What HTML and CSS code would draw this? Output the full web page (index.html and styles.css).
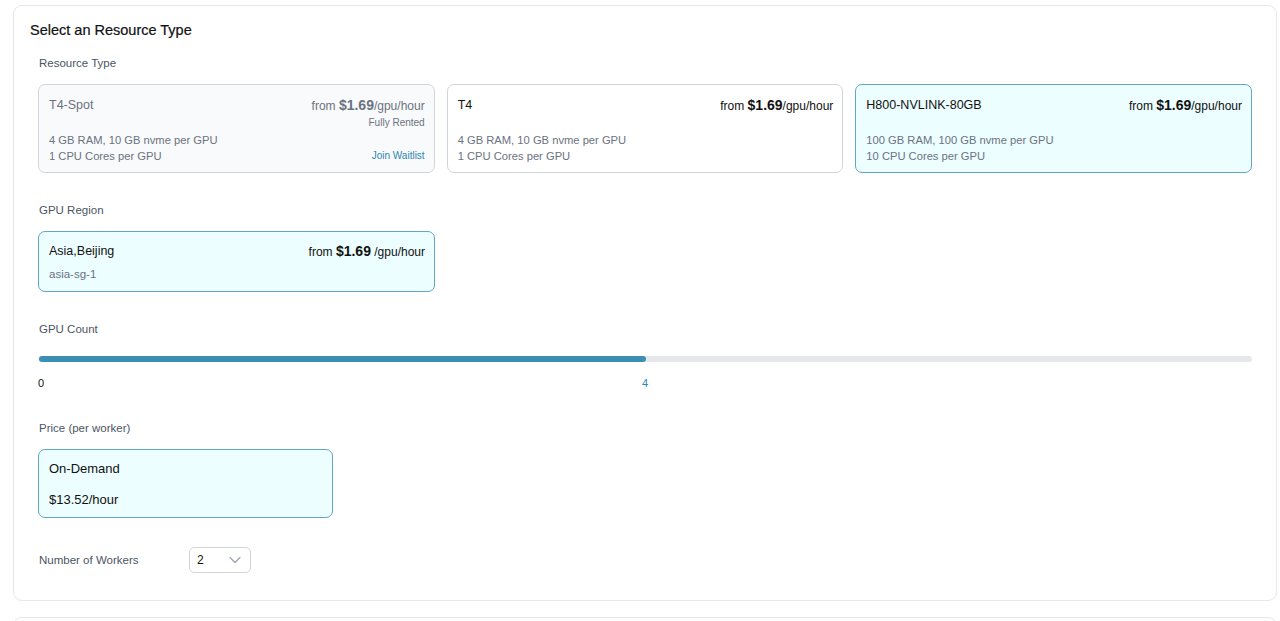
FILE: index.html
```html
<!DOCTYPE html>
<html lang="en">
<head>
    <meta charset="UTF-8">
    <meta name="viewport" content="width=device-width, initial-scale=1.0">
    <title>Select an Resource Type</title>
    <link rel="stylesheet" href="styles.css">
</head>
<body>
    <div class="panel">
        <h2 class="panel-title">Select an Resource Type</h2>

        <div class="section">
            <div class="field-label">Resource Type</div>
            <div class="type-grid">
                <div class="option-card disabled">
                    <div class="card-top">
                        <span class="card-name">T4-Spot</span>
                        <div class="card-right">
                            <span class="price">from <b>$1.69</b>/gpu/hour</span>
                            <span class="status">Fully Rented</span>
                        </div>
                    </div>
                    <div class="card-bottom">
                        <div class="specs">
                            <div>4 GB RAM, 10 GB nvme per GPU</div>
                            <div>1 CPU Cores per GPU</div>
                        </div>
                        <a class="waitlist" href="#">Join Waitlist</a>
                    </div>
                </div>

                <div class="option-card">
                    <div class="card-top">
                        <span class="card-name">T4</span>
                        <span class="price">from <b>$1.69</b>/gpu/hour</span>
                    </div>
                    <div class="card-bottom">
                        <div class="specs">
                            <div>4 GB RAM, 10 GB nvme per GPU</div>
                            <div>1 CPU Cores per GPU</div>
                        </div>
                    </div>
                </div>

                <div class="option-card selected">
                    <div class="card-top">
                        <span class="card-name">H800-NVLINK-80GB</span>
                        <span class="price">from <b>$1.69</b>/gpu/hour</span>
                    </div>
                    <div class="card-bottom">
                        <div class="specs">
                            <div>100 GB RAM, 100 GB nvme per GPU</div>
                            <div>10 CPU Cores per GPU</div>
                        </div>
                    </div>
                </div>
            </div>

            <div class="field-label">GPU Region</div>
            <div class="region-card selected">
                <div class="card-top">
                    <span class="card-name">Asia,Beijing</span>
                    <span class="price">from <b>$1.69</b> /gpu/hour</span>
                </div>
                <div class="region-code">asia-sg-1</div>
            </div>

            <div class="field-label">GPU Count</div>
            <div class="slider">
                <div class="slider-fill" style="width: 50%"></div>
            </div>
            <div class="slider-marks">
                <span>0</span>
                <span class="mark-current" style="left: 50%">4</span>
            </div>

            <div class="field-label">Price (per worker)</div>
            <div class="price-card selected">
                <div>On-Demand</div>
                <div>$13.52/hour</div>
            </div>

            <div class="workers-row">
                <span class="workers-label">Number of Workers</span>
                <div class="select">
                    <span>2</span>
                    <svg width="12" height="8" viewBox="0 0 12 8" fill="none" stroke="#9ca3af" stroke-width="1.2" stroke-linecap="round" stroke-linejoin="round">
                        <path d="M1 1.5l5 5 5-5"/>
                    </svg>
                </div>
            </div>
        </div>
    </div>

    <div class="panel next-panel"></div>
</body>
</html>
```

FILE: styles.css
```css
* {
    margin: 0;
    padding: 0;
    box-sizing: border-box;
}

html {
    overflow: hidden;
}

body {
    font-family: 'Liberation Sans', Arial, sans-serif;
    background: #fff;
    color: #111827;
    padding: 5px 3px 0 13px;
    height: 621px;
    overflow: hidden;
}

.panel {
    border: 1px solid #e5e7eb;
    border-radius: 9px;
    background: #fff;
    padding: 14px 0 24px 16px;
    height: 596px;
}

.next-panel {
    margin-top: 16px;
    height: 40px;
}

.panel-title {
    font-size: 14.5px;
    font-weight: 500;
    line-height: 20px;
    color: #111;
    -webkit-text-stroke: 0.2px #111;
}

.section {
    padding: 0 24px 0 8px;
}

.field-label {
    font-size: 11.5px;
    font-weight: 500;
    color: #4b5563;
    line-height: 16px;
    margin: 29px 0 13px 1px;
}

.section > .field-label:first-child {
    margin-top: 15px;
}

.type-grid {
    display: grid;
    grid-template-columns: repeat(3, 1fr);
    gap: 12px;
}

.option-card {
    height: 89px;
    border: 1px solid #d1d5db;
    border-radius: 7px;
    background: #fff;
    padding: 10px 9px 8px 10px;
    display: flex;
    flex-direction: column;
    justify-content: space-between;
}

.option-card.disabled {
    background: #f9fafb;
}

.option-card.disabled .card-name {
    color: #6b7280;
}

.selected {
    background: #ecfeff;
    border-color: #62a6c4;
}

.card-top {
    display: flex;
    justify-content: space-between;
    align-items: flex-start;
}

.card-name {
    font-size: 12.5px;
    line-height: 20px;
    color: #111;
}

.card-right {
    display: flex;
    flex-direction: column;
    align-items: flex-end;
}

.price {
    font-size: 12px;
    line-height: 20px;
    color: #111;
}

.disabled .price {
    color: #6b7280;
}

.price b {
    font-size: 14px;
    font-weight: 600;
}

.status {
    font-size: 10px;
    color: #6b7280;
    line-height: 14px;
}

.card-bottom {
    display: flex;
    justify-content: space-between;
    align-items: flex-end;
}

.specs {
    font-size: 11.2px;
    line-height: 16px;
    color: #6b7280;
}

.waitlist {
    font-size: 10px;
    line-height: 16px;
    color: #2d86b3;
    text-decoration: none;
}

.region-card {
    width: 397px;
    height: 61px;
    border: 1px solid #62a6c4;
    border-radius: 7px;
    padding: 9px 9px 9px 10px;
}

.region-code {
    font-size: 11.5px;
    color: #6b7280;
    line-height: 16px;
    margin-top: 4px;
}

.slider {
    height: 6px;
    border-radius: 3px;
    background: #e5e7eb;
    margin-top: 19px;
    margin-left: 1px;
}

.slider-fill {
    height: 100%;
    border-radius: 3px;
    background: #3b8fb6;
}

.slider-marks {
    position: relative;
    height: 16px;
    margin-top: 13px;
    font-size: 11px;
    line-height: 16px;
    color: #111;
}

.mark-current {
    position: absolute;
    top: 0;
    transform: translateX(-50%);
    color: #2d86b3;
}

.price-card {
    width: 295px;
    height: 69px;
    margin-top: 1px;
    border: 1px solid #62a6c4;
    border-radius: 7px;
    padding: 9px 10px;
    font-size: 13px;
    line-height: 20px;
    color: #111;
    display: flex;
    flex-direction: column;
    gap: 11px;
}

.workers-row {
    display: flex;
    align-items: center;
    margin-top: 29px;
    margin-left: 1px;
}

.workers-label {
    font-size: 11.5px;
    font-weight: 500;
    color: #4b5563;
    width: 150px;
}

.select {
    width: 62px;
    height: 26px;
    border: 1px solid #d1d5db;
    border-radius: 5px;
    display: flex;
    align-items: center;
    justify-content: space-between;
    padding: 0 9px 0 7px;
    font-size: 12px;
    color: #111;
}
```
